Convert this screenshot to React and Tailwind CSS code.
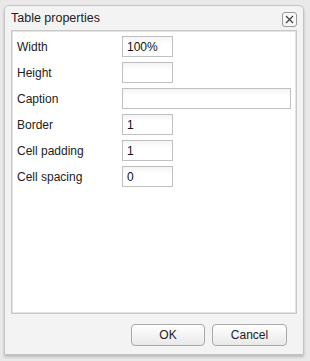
export default function App() {
  const rows = [
    { label: "Width", value: "100%", wide: false },
    { label: "Height", value: "", wide: false },
    { label: "Caption", value: "", wide: true },
    { label: "Border", value: "1", wide: false },
    { label: "Cell padding", value: "1", wide: false },
    { label: "Cell spacing", value: "0", wide: false },
  ];

  return (
    <div
      className="w-[310px] h-[361px] bg-[#e9e9e9] pt-[5px] pl-[4px] overflow-hidden"
      style={{ fontFamily: '"Liberation Sans", Arial, sans-serif' }}
    >
      <div className="w-[300px] h-[350px] bg-[#f3f3f3] border border-[#c4c4c4] rounded-t-[5px] shadow-[0_2px_3px_rgba(0,0,0,0.2)] flex flex-col px-[6px]">
        {/* title */}
        <div className="h-[24px] flex items-center justify-between">
          <span className="text-[12.5px] text-[#222] pt-[1px]">Table properties</span>
          <button className="w-[15px] h-[15px] border border-[#9a9a9a] rounded-[3px] bg-[#f8f8f8] flex items-center justify-center mt-[2px]">
            <svg width="9" height="9" viewBox="0 0 9 9">
              <path d="M1 1L8 8M8 1L1 8" stroke="#444" strokeWidth="1.3" />
            </svg>
          </button>
        </div>

        {/* panel */}
        <div className="h-[284px] bg-white border border-[#c8c8c8] shadow-[inset_0_0_0_1px_#e4e4e4] pl-[5px] pr-[5px] pt-[5px] flex flex-col gap-[5px]">
          {rows.map((r) => (
            <div key={r.label} className="flex items-center h-[21px]">
              <span className="w-[105px] shrink-0 text-[12px] text-[#222]">{r.label}</span>
              <div
                className={
                  (r.wide ? "w-[169px]" : "w-[51px]") +
                  " h-[21px] shrink-0 border border-[#c0c0c0] bg-gradient-to-b from-[#f4f4f4] to-white to-[35%] text-[12px] text-[#111] pl-[4px] flex items-center"
                }
              >
                {r.value}
              </div>
            </div>
          ))}
        </div>

        {/* buttons */}
        <div className="flex justify-end gap-[7px] pr-[10px] pt-[10px]">
          <button className="w-[74px] h-[22px] border border-[#a9a9a9] rounded-[4px] bg-gradient-to-b from-white to-[#e9e9e9] text-[12px] text-[#222]">
            OK
          </button>
          <button className="w-[75px] h-[22px] border border-[#a9a9a9] rounded-[4px] bg-gradient-to-b from-white to-[#e9e9e9] text-[12px] text-[#222]">
            Cancel
          </button>
        </div>
      </div>
    </div>
  );
}
